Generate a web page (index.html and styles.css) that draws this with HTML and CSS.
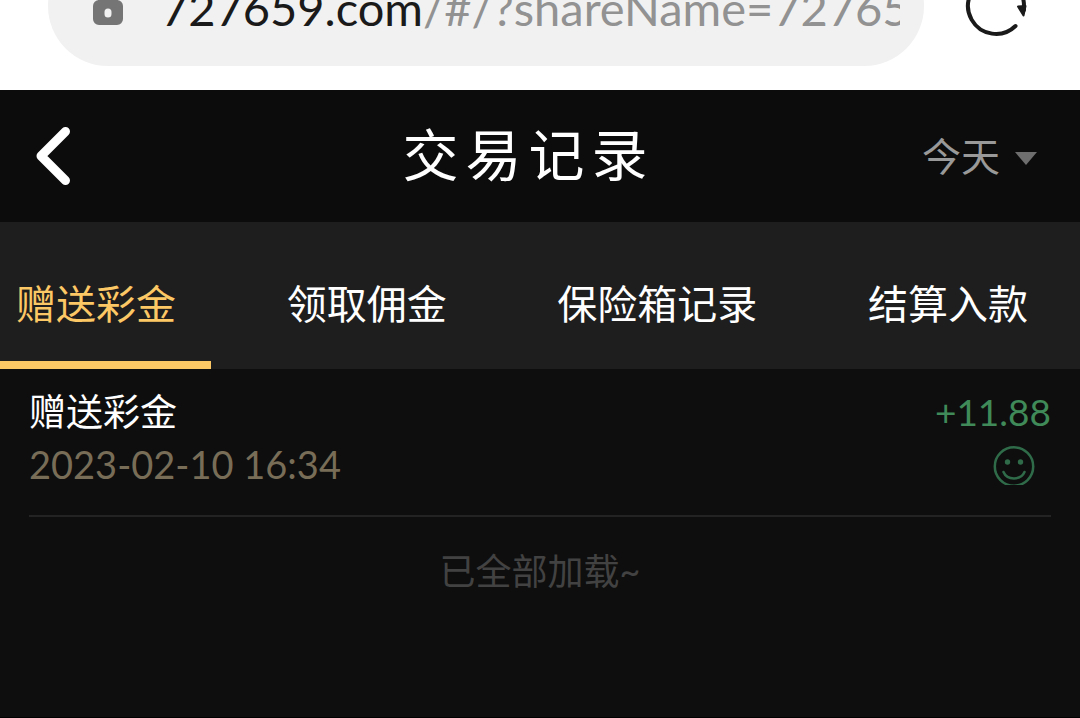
FILE: index.html
```html
<!DOCTYPE html>
<html lang="zh-CN">
<head>
<meta charset="utf-8">
<meta name="viewport" content="width=device-width, initial-scale=1">
<title>交易记录</title>
<link rel="stylesheet" href="styles.css">
</head>
<body>
<div class="browser-bar">
  <button class="address" type="button">
    <svg class="lock" width="30" height="44" viewBox="0 0 30 44" aria-hidden="true">
      <path d="M7.500 20V11a7.500 7.500 0 0 1 15 0v9" fill="none" stroke="#757575" stroke-width="5"/>
      <path fill="#757575" fill-rule="evenodd" d="M6 17h18a6 6 0 0 1 6 6v13a6 6 0 0 1-6 6H6a6 6 0 0 1-6-6V23a6 6 0 0 1 6-6zM15 25.500a3.500 3.500 0 0 0-3.500 3.500v2a3.500 3.500 0 0 0 7 0v-2A3.500 3.500 0 0 0 15 25.500z"/>
    </svg>
    <span class="url"><span class="host">727659.com</span>/#/?shareName=72765</span>
  </button>
  <button class="reload" type="button" aria-label="刷新">
    <svg width="64" height="64" viewBox="0 0 64 64" aria-hidden="true">
      <path d="M51.500 52A28 28 0 1 1 60 32V36" fill="none" stroke="#1a1a1a" stroke-width="4" stroke-linecap="round"/>
      <path d="M54 32.500L61.500 32L59.500 41.500z" fill="#1a1a1a" stroke="#1a1a1a" stroke-width="2" stroke-linejoin="round"/>
    </svg>
  </button>
</div>

<header class="title-bar">
  <button class="back" type="button" aria-label="返回">
    <svg width="34" height="58" viewBox="0 0 34 58" aria-hidden="true">
      <path d="M29.500 4.500L5 29L29.500 53.500" fill="none" stroke="#fff" stroke-width="9" stroke-linecap="round" stroke-linejoin="round"/>
    </svg>
  </button>
  <h1 class="title">交易记录</h1>
  <div class="range">
    <select class="range-select" aria-label="日期"><option>今天</option></select>
    <svg class="caret" width="22" height="14" viewBox="0 0 22 14" aria-hidden="true"><path d="M0 1H22L11 14z" fill="#6e6e6e"/></svg>
  </div>
</header>

<nav class="tabs">
  <button class="tab tab-active" type="button">赠送彩金</button>
  <button class="tab" type="button">领取佣金</button>
  <button class="tab" type="button">保险箱记录</button>
  <button class="tab" type="button">结算入款</button>
</nav>

<main class="records">
  <article class="record">
    <div class="record-main">
      <h2 class="record-name">赠送彩金</h2>
      <time class="record-time" datetime="2023-02-10T16:34">2023-02-10 16:34</time>
    </div>
    <div class="record-side">
      <span class="amount">+11.88</span>
      <svg class="face" width="42" height="39" viewBox="0 0 42 39" aria-hidden="true">
        <g fill="none" stroke="#2f6b49" stroke-width="2.500" stroke-linecap="round">
          <circle cx="21" cy="20.500" r="19.200"/>
          <path d="M10.500 26C14 34.500 28 34.500 31.500 26"/>
        </g>
        <circle cx="14.500" cy="16" r="2.700" fill="#2f6b49"/>
        <circle cx="27.500" cy="16" r="2.700" fill="#2f6b49"/>
      </svg>
    </div>
  </article>
  <p class="end">已全部加载~</p>
</main>
</body>
</html>
```
FILE: styles.css
```css
* {
  box-sizing: border-box;
}

body {
  display: flex;
  flex-direction: column;
  min-height: 100vh;
  margin: 0;
  background: #0e0e0e;
  color: #fff;
  font-family: Lato, "Noto Sans CJK SC", sans-serif;
}

button,
select {
  margin: 0;
  padding: 0;
  border: 0;
  background: none;
  color: inherit;
  font: inherit;
}

h1,
h2,
p {
  margin: 0;
  font-weight: 400;
}

svg {
  display: block;
  flex: none;
}

.browser-bar {
  display: flex;
  align-items: flex-end;
  gap: 40px;
  height: 90px;
  padding: 0 52px 24px 48px;
  overflow: hidden;
  background: #fff;
}

.address {
  display: flex;
  flex: 1;
  align-items: center;
  gap: 38px;
  min-width: 0;
  height: 120px;
  padding: 0 24px 0 45px;
  border-radius: 60px;
  background: #f1f1f1;
}

.lock {
  margin-bottom: 2px;
}

.url {
  flex: 1;
  min-width: 0;
  padding-top: 4px;
  overflow: hidden;
  color: #929292;
  font-size: 47px;
  line-height: 64px;
  text-align: left;
  white-space: nowrap;
}

.host {
  color: #1a1a1a;
}

.reload {
  display: flex;
  align-items: center;
  height: 120px;
}

.title-bar {
  display: grid;
  grid-template-columns: 1fr auto 1fr;
  align-items: center;
  height: 132px;
  padding: 0 43px 0 36px;
  background: #0c0c0c;
}

.back {
  justify-self: start;
}

.title {
  padding: 0 16px 2px 0;
  font-size: 56px;
  line-height: 80px;
  letter-spacing: 7px;
}

.range {
  display: flex;
  justify-self: end;
  align-items: center;
  gap: 14px;
  color: #999;
}

.range-select {
  appearance: none;
  font-size: 39px;
  line-height: 56px;
}

.caret {
  margin-top: 4px;
}

.tabs {
  display: flex;
  justify-content: space-between;
  padding-right: 17px;
  background: #1e1e1e;
}

.tab {
  height: 147px;
  padding: 24px 35px 0 16px;
  border-bottom: 8px solid transparent;
  font-size: 40px;
  line-height: 56px;
}

.tab-active {
  border-color: #fcc765;
  color: #fcc765;
}

.records {
  flex: 1;
  padding: 17px 29px 0;
  border-bottom: 1px solid #000;
}

.record {
  display: flex;
  justify-content: space-between;
  padding-bottom: 25px;
  border-bottom: 2px solid #232323;
}

.record-main,
.record-side {
  display: flex;
  flex-direction: column;
}

.record-side {
  align-items: flex-end;
  gap: 8px;
}

.record-name {
  font-size: 37px;
  line-height: 52px;
}

.record-time {
  color: #786d57;
  font-size: 38px;
  line-height: 52px;
}

.amount {
  color: #3f8a58;
  font-size: 37px;
  line-height: 52px;
}

.face {
  margin-right: 16px;
}

.end {
  padding-top: 28px;
  color: #424242;
  font-size: 36px;
  line-height: 52px;
  text-align: center;
}
```
